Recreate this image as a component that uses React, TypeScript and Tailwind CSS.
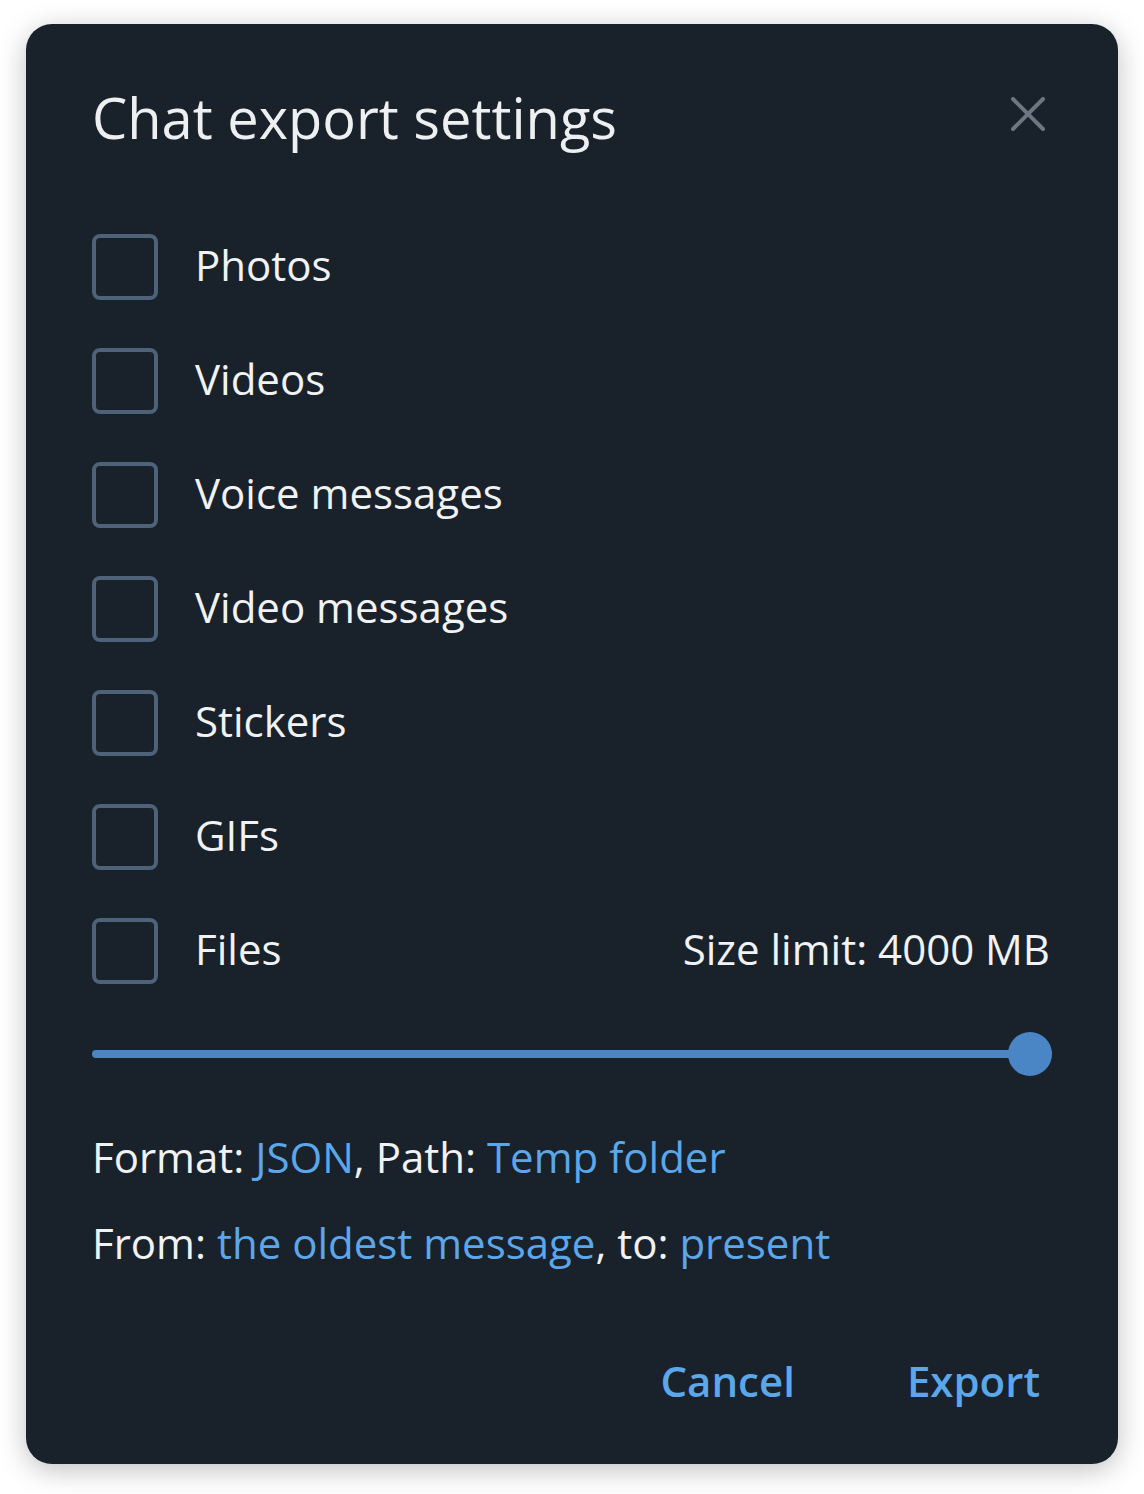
import { useState } from 'react'

const options = ['Photos', 'Videos', 'Voice messages', 'Video messages', 'Stickers', 'GIFs']

function Checkbox({ checked, onToggle }: { checked: boolean; onToggle: () => void }) {
  return (
    <button
      onClick={onToggle}
      className="w-[66px] h-[66px] shrink-0 rounded-[8px] border-[4px] border-[#4e6279] bg-transparent"
    />
  )
}

export default function App() {
  const [checked, setChecked] = useState<Record<string, boolean>>({})
  const toggle = (k: string) => setChecked((c) => ({ ...c, [k]: !c[k] }))

  return (
    <div className="min-h-[1494px] bg-white pt-[24px] pl-[26px] font-['Open_Sans',sans-serif]">
      <div className="w-[1092px] h-[1440px] rounded-[26px] bg-[#19212b] shadow-[0_6px_28px_rgba(0,0,0,0.25)] pl-[66px] pr-[68px] pt-[78px] flex flex-col">
        {/* header */}
        <div className="flex items-start justify-between">
          <h1 className="text-[56px] font-medium leading-[76px] text-[#eeeff1] -mt-[23px]">Chat export settings</h1>
          <svg width="34" height="34" viewBox="0 0 34 34" className="-mt-[5px] mr-[5px]">
            <path d="M2 2 L32 32 M32 2 L2 32" stroke="#6c7782" strokeWidth="4" strokeLinecap="round" />
          </svg>
        </div>

        {/* media types */}
        <div className="mt-[79px] flex flex-col gap-[48px]">
          {options.map((o) => (
            <div key={o} className="flex items-center gap-[37px]">
              <Checkbox checked={!!checked[o]} onToggle={() => toggle(o)} />
              <span className="text-[42px] text-[#f0f2f4] leading-none pb-[5px]">{o}</span>
            </div>
          ))}
          <div className="flex items-center gap-[37px]">
            <Checkbox checked={!!checked.files} onToggle={() => toggle('files')} />
            <span className="text-[42px] text-[#f0f2f4] leading-none pb-[5px]">Files</span>
            <span className="ml-auto text-[42px] text-[#f0f2f4] leading-none pb-[5px]">Size limit: 4000 MB</span>
          </div>
        </div>

        {/* size slider */}
        <div className="mt-[48px] -mr-[2px] relative h-[44px] flex items-center">
          <div className="h-[8px] w-full rounded-full bg-[#4a86c5]" />
          <div className="absolute right-0 top-0 w-[44px] h-[44px] rounded-full bg-[#4a86c5]" />
        </div>

        {/* format / range */}
        <div className="mt-[58px] flex flex-col gap-[40px] text-[42px] leading-[46px] text-[#f0f2f4]">
          <p>
            Format: <span className="text-[#5ca6ea]">JSON</span>, Path: <span className="text-[#5ca6ea]">Temp folder</span>
          </p>
          <p>
            From: <span className="text-[#5ca6ea]">the oldest message</span>, to: <span className="text-[#5ca6ea]">present</span>
          </p>
        </div>

        {/* actions */}
        <div className="mt-auto mb-[62px] flex justify-end gap-[112px] pr-[10px]">
          <button className="text-[42px] font-semibold text-[#5ca6ea] leading-none">Cancel</button>
          <button className="text-[42px] font-semibold text-[#5ca6ea] leading-none">Export</button>
        </div>
      </div>
    </div>
  )
}
